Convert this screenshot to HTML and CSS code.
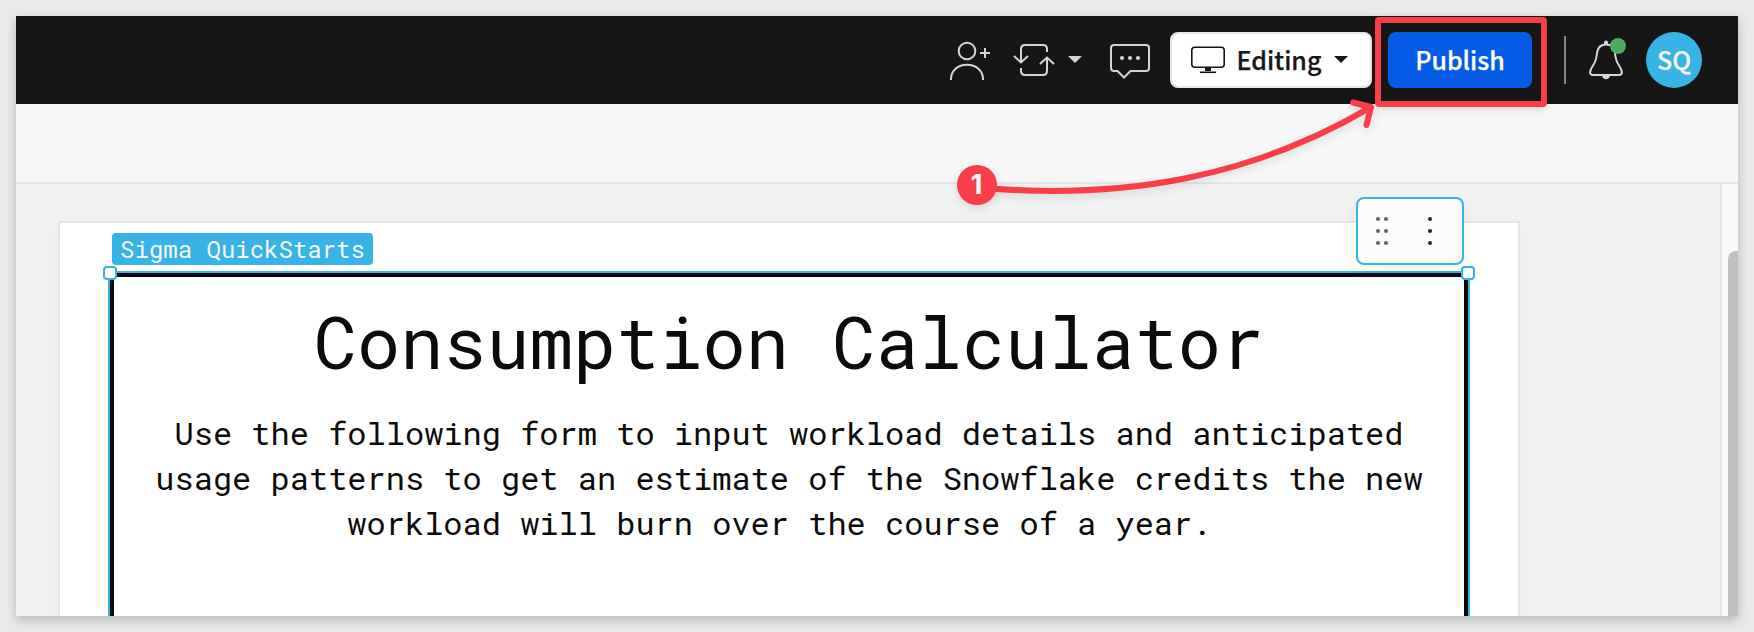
FILE: index.html
```html
<!DOCTYPE html>
<html lang="en">
<head>
<meta charset="utf-8">
<title>Consumption Calculator</title>
<link rel="stylesheet" href="styles.css">
</head>
<body>
<div class="window">
  <header class="topbar">
    <svg class="icon" width="44" height="56" viewBox="0 0 44 56"><circle cx="19" cy="19" r="8.300"/><path d="M3 48v-1c0-8.500 7-14.300 16-14.300s16 5.800 16 14.300v1"/><path d="M32 21h10M37 16v10"/></svg>
    <svg class="icon icon-sync" width="44" height="56" viewBox="0 0 44 56"><path d="M9 29.500V17q0-4 4-4h18q4 0 4 4v3M2 24l7 6.500 7-6.500"/><path d="M9 36v3q0 4 4 4h18q4 0 4-4V26M28 32l7-6.500 7 6.500"/></svg>
    <svg class="caret caret-light" width="14" height="7" viewBox="0 0 14 7"><path d="M0 0h14L7 7z"/></svg>
    <svg class="icon icon-chat" width="44" height="56" viewBox="0 0 44 56"><path d="M6 13h32q3 0 3 3v20q0 3-3 3H22.500L16 45.500 9.500 39H6q-3 0-3-3V16q0-3 3-3z"/><g class="dots"><circle cx="14" cy="26" r="2.100"/><circle cx="22" cy="26" r="2.100"/><circle cx="30" cy="26" r="2.100"/></g></svg>
    <button class="button mode">
      <svg width="34" height="28" viewBox="0 0 34 28"><rect x=".8" y="1.200" width="32.400" height="20" rx="3"/><path class="solid" d="M14 21.500h6V25h-6z"/><path d="M9 26.300h16"/></svg>
      <span class="label">Editing</span>
      <svg class="caret caret-dark" width="14" height="7" viewBox="0 0 14 7"><path d="M0 0h14L7 7z"/></svg>
    </button>
    <button class="button publish"><span class="label">Publish</span></button>
    <div class="divider"></div>
    <div class="bell">
      <svg class="icon" width="36" height="44" viewBox="0 0 36 44"><path d="M18 6.500c-5.500 0-8 3-8.800 7.500C8.500 21 8 23.500 5 27.500 1.500 32.500.8 37 5 37h26c4.200 0 3.500-4.500 0-9.500-3-4-3.500-6.500-4.200-13.500C26 9.500 23.500 6.500 18 6.500z"/><path class="fill" d="M16 7V4.500a2 2 0 0 1 4 0V7zM14 37.500h8c-.5 5-7.500 5-8 0z"/></svg>
      <span class="status"></span>
    </div>
    <div class="avatar">SQ</div>
  </header>
  <div class="toolbar"></div>
  <div class="workspace">
    <main class="paper">
      <div class="tag">Sigma QuickStarts</div>
      <section class="element">
        <h1>Consumption Calculator</h1>
        <p>Use the following form to input workload details and anticipated<br>usage patterns to get an estimate of the Snowflake credits the new<br>workload will burn over the course of a year.&nbsp;</p>
        <span class="handle handle-left"></span>
        <span class="handle handle-right"></span>
      </section>
      <div class="element-menu">
        <svg width="104" height="64" viewBox="0 0 104 64"><g fill="#666"><circle cx="20" cy="20" r="2.100"/><circle cx="28" cy="20" r="2.100"/><circle cx="20" cy="32" r="2.100"/><circle cx="28" cy="32" r="2.100"/><circle cx="20" cy="44" r="2.100"/><circle cx="28" cy="44" r="2.100"/></g><g fill="#292929"><circle cx="72" cy="20" r="2.100"/><circle cx="72" cy="32" r="2.100"/><circle cx="72" cy="44" r="2.100"/></g></svg>
      </div>
    </main>
    <div class="scrollbar"><div class="thumb"></div></div>
  </div>
</div>
<div class="highlight"></div>
<svg class="arrow" width="400" height="110" viewBox="985 90 400 110"><path d="M993 188.800C1125 198 1250 178.500 1371 107.200M1353 102.500 1371 107 1366.500 125"/></svg>
<div class="step">1</div>
</body>
</html>
```
FILE: styles.css
```css
* { box-sizing: border-box; }
body {
  margin: 0;
  height: 632px;
  padding: 16px;
  overflow: hidden;
  background: #eaeaea;
  font-family: "Noto Sans CJK SC", "Noto Sans", sans-serif;
}
svg { display: block; flex: none; }
.window {
  display: flex;
  flex-direction: column;
  width: 1722px;
  height: 600px;
  overflow: hidden;
  background: #f2f2f2;
  box-shadow: 0 4px 10px rgba(0, 0, 0, .22);
}
.topbar {
  display: flex;
  align-items: center;
  justify-content: flex-end;
  flex: none;
  height: 88px;
  padding-right: 36px;
  background: #161616;
}
.icon { fill: none; stroke: #d5d5d5; stroke-width: 2; }
.icon .dots, .icon .fill { fill: #d5d5d5; stroke: none; }
.icon-sync { margin-left: 20px; }
.caret-light { margin: 0 26px 0 12px; fill: #d5d5d5; transform: translateY(-1px); }
.caret-dark { margin-left: 1px; fill: #161616; transform: translateY(-1px); }
.icon-chat { margin-right: 18px; }
.button {
  display: flex;
  align-items: center;
  justify-content: center;
  height: 56px;
  padding: 0;
  border: 0;
  border-radius: 8px;
  font: 500 25px/36px "Noto Sans CJK SC", "Noto Sans", sans-serif;
}
.label { padding-bottom: 2px; -webkit-text-stroke: .25px currentColor; }
.mode {
  width: 202px;
  gap: 12px;
  padding-right: 3px;
  border: 2px solid #e5e5e5;
  background: #fff;
  color: #161616;
}
.mode svg:first-child { fill: none; stroke: #161616; stroke-width: 1.6; }
.mode .solid { fill: #161616; stroke: none; }
.publish { width: 144px; margin-left: 16px; background: #055ae6; color: #fff; }
.divider { width: 2px; height: 48px; margin: 0 22px 0 32px; background: #858585; }
.bell { position: relative; width: 36px; height: 44px; margin-right: 22px; }
.status {
  position: absolute;
  left: 22px;
  top: 0;
  width: 16px;
  height: 16px;
  border-radius: 50%;
  background: #4fa963;
}
.avatar {
  width: 56px;
  height: 56px;
  border-radius: 50%;
  background: #37b3e5;
  color: #f5f5f5;
  font-size: 25px;
  font-weight: 500;
  line-height: 54px;
  text-align: center;
  -webkit-text-stroke: .25px currentColor;
}
.toolbar { flex: none; height: 80px; border-bottom: 2px solid #e5e5e5; background: #f7f7f7; }
.workspace { display: flex; flex: 1; min-height: 0; justify-content: space-between; }
.paper {
  position: relative;
  width: 1462px;
  height: 500px;
  margin: 37px 0 0 42px;
  padding: 10px 48px 0;
  border: 2px solid #e5e5e5;
  background: #fff;
  box-shadow: 0 8px 24px rgba(0, 0, 0, .04);
}
.tag {
  width: 261px;
  height: 32px;
  margin-left: 4px;
  border-radius: 4px;
  background: #37b3e5;
  color: #f5f5f5;
  font: 24px/32px "Roboto Mono", "Liberation Mono", monospace;
  text-align: center;
  white-space: nowrap;
}
.element {
  position: relative;
  width: 1358px;
  height: 500px;
  margin: 8px 0 0 2px;
  border: 4px solid #060a0c;
  outline: 2px solid #37b3e5;
  color: #0b0b0b;
  font-family: "Roboto Mono", "Liberation Mono", monospace;
  text-align: center;
}
h1 { margin: 20px 0 0; font-size: 72px; font-weight: 400; line-height: 90px; }
p { margin: 23px 0 0; font-size: 32px; line-height: 45px; white-space: nowrap; }
.handle {
  position: absolute;
  top: -11px;
  width: 14px;
  height: 14px;
  border: 2px solid #37b3e5;
  border-radius: 4px;
  background: #fff;
}
.handle-left { left: -11px; }
.handle-right { right: -11px; }
.element-menu {
  position: absolute;
  left: 1296px;
  top: -26px;
  width: 108px;
  height: 68px;
  border: 2px solid #37b3e5;
  border-radius: 8px;
  background: #fcfcfc;
  box-shadow: 0 6px 20px rgba(0, 0, 0, .06);
}
.scrollbar { width: 18px; padding: 67px 0 0; border-left: 2px solid #e5e5e5; background: #fafafa; }
.thumb { width: 10px; height: 500px; margin-left: 6px; border-radius: 8px 0 0 0; background: #c1c1c1; }
.highlight {
  position: absolute;
  left: 1375.400px;
  top: 17.400px;
  width: 172px;
  height: 89.500px;
  border: 6px solid #f73e49;
  border-radius: 4px;
  box-shadow: 0 3px 8px rgba(0, 0, 0, .12);
}
.arrow {
  position: absolute;
  left: 985px;
  top: 90px;
  fill: none;
  stroke: #f73e49;
  stroke-width: 6;
  stroke-linecap: round;
  stroke-linejoin: round;
  filter: drop-shadow(0 3px 4px rgba(0, 0, 0, .12));
}
.step {
  position: absolute;
  left: 957px;
  top: 165px;
  width: 40px;
  height: 40px;
  padding-right: 1px;
  border-radius: 50%;
  background: #f73e49;
  color: #fff;
  font: 700 27px/39px Inter, sans-serif;
  text-align: center;
  box-shadow: 0 3px 8px rgba(0, 0, 0, .12);
}
```
